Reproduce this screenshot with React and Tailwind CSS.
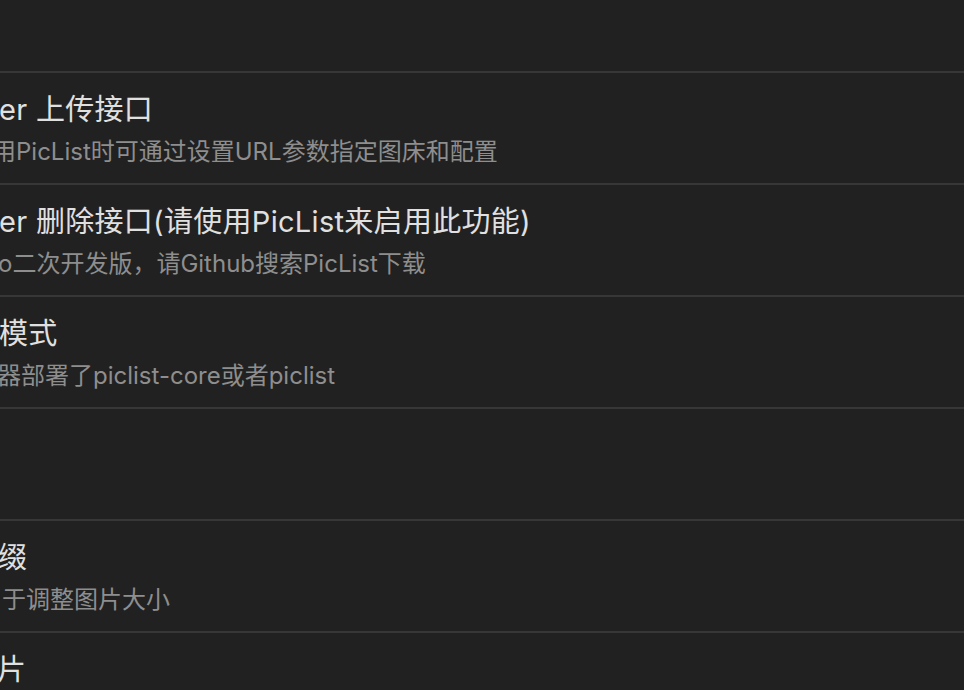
import React from "react";

const rows = [
  { t: "er 上传接口", tm: "-ml-[1px]", s: "用PicList时可通过设置URL参数指定图床和配置", sm: "-ml-[8px]" },
  { t: "er 删除接口(请使用PicList来启用此功能)", tm: "-ml-[1px]", s: "o二次开发版，请Github搜索PicList下载", sm: "-ml-[2px]" },
  { t: "模式", tm: "-ml-[1px]", s: "器部署了piclist-core或者piclist", sm: "-ml-[3px]" },
  { t: "", tm: "ml-0", s: "", sm: "ml-0" },
  { t: "缀", tm: "-ml-[2px]", s: "于调整图片大小", sm: "ml-[2px]" },
  { t: "片", tm: "-ml-[3px]", s: "", sm: "ml-0" },
];

export default function App() {
  return (
    <div
      className="w-[964px] h-[690px] overflow-hidden bg-[#212121] whitespace-nowrap"
      style={{ fontFamily: 'Inter, "Noto Sans CJK SC", sans-serif' }}
    >
      <div className="h-[71px]" />
      {rows.map((r, i) => (
        <div key={i} className="h-[112px] border-t-2 border-[#373737] pt-[17px]">
          <div className={`${r.tm} h-[40px] leading-[40px] text-[29px] tracking-[0.3px] text-[#e0e0e0]`}>{r.t}</div>
          <div className={`${r.sm} mt-[6px] h-[32px] leading-[32px] text-[24px] text-[#8e8e8e]`}>{r.s}</div>
        </div>
      ))}
    </div>
  );
}
